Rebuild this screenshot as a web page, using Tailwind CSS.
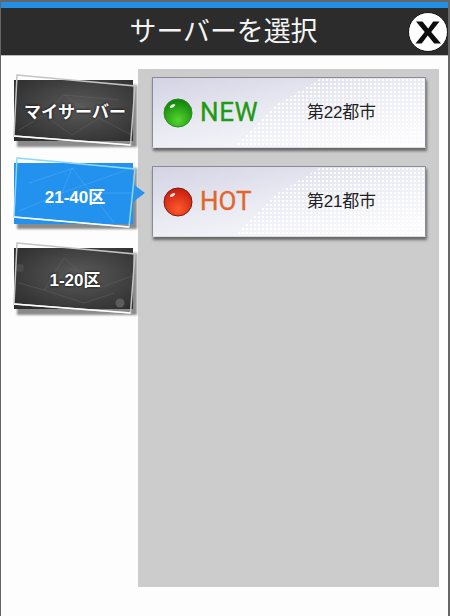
<!DOCTYPE html>
<html>
<head>
<meta charset="UTF-8">
<script src="https://cdn.jsdelivr.net/npm/@tailwindcss/browser@4"></script>
</head>
<body class="bg-white">
<div class="w-[450px] h-[616px] flex flex-col overflow-hidden bg-[#fdfdfd] border-x border-x-[#666] border-r-2 font-['Liberation_Sans','Noto_Sans_CJK_JP',sans-serif]">
  <!-- header -->
  <div class="h-[2px] bg-[#666] -mx-px"></div>
  <div class="h-[6px] bg-[#2390e6]"></div>
  <div class="relative h-[48px] bg-[#2c2c2c] border-b border-b-[#bbb] flex items-center justify-center pr-[2px]">
    <h1 class="text-[26.9px] leading-none text-[#f4f4f4] font-normal pt-[1px]">サーバーを選択</h1>
    <button class="absolute right-[0px] top-[4px] w-[40px] h-[40px]">
      <svg viewBox="0 0 40 40" class="w-full h-full">
        <circle cx="20" cy="20" r="19.500" fill="#fff" stroke="#111" stroke-width="1"/>
        <path d="M8 9.500h6.500l5.700 7 5-7h6.300l-8.300 10.500 9.800 11.500h-6.800l-6.400-8-6.100 8h-6.200l9.200-11.600z" fill="#0d0d0d"/>
      </svg>
    </button>
  </div>
  <!-- body -->
  <div class="flex pt-[13px]">
    <ul class="w-[137px] shrink-0 pl-[13px] pt-[11px] flex flex-col">
      <li class="relative w-[120px] h-[62px] flex items-center justify-center pt-[3px]">
        <svg viewBox="0 0 120 62" class="absolute inset-0 w-[120px] h-[62px] overflow-visible">
          <defs>
            <radialGradient id="dark" cx="0.55" cy="0.45" r="0.7"><stop offset="0" stop-color="#5a5a5a"/><stop offset="1" stop-color="#2e2e2e"/></radialGradient>
            <filter id="blur" x="-10%" y="-20%" width="120%" height="140%"><feGaussianBlur stdDeviation="1"/></filter>
          </defs>
          <rect x="3" y="5" width="120" height="62" fill="#8a8a8a" filter="url(#blur)"/>
          <rect width="119" height="61" fill="url(#dark)"/>
          <path d="M5 50 30 35 58 55 85 38 118 55M30 35 50 15 85 38M50 15 105 20" stroke="#6b6b6b" stroke-width=".4" fill="none"/>
          <polygon points="3,-5 121,6 116.500,65 0,56" fill="none" stroke="#c4c4c4" stroke-width="1.500"/>
          <path d="M0 56 116.500 65" stroke="#fff" stroke-width="1.500"/>
        </svg>
        <span class="relative left-[1px] text-[17px] font-bold text-white whitespace-nowrap [text-shadow:0_0_3px_#000]">マイサーバー</span>
      </li>
      <li class="relative w-[120px] h-[62px] mt-[21px] flex items-center justify-center pt-[7px]">
        <svg viewBox="0 0 120 62" class="absolute inset-0 w-[120px] h-[62px] overflow-visible">
          <rect x="3" y="5" width="120" height="61" fill="#8a8a8a" filter="url(#blur)"/>
          <polygon points="119,21 131,30 119,39" fill="#2b93ea"/>
          <rect width="119" height="61" fill="#2392ee"/>
          <path d="M5 48 48 30 118 5M48 30 58 5 100 60M72 30 118 30M60 5 15 20" stroke="#5fb0f2" stroke-width=".4" fill="none"/>
          <polygon points="3,-5 121,6 115,64 0,54" fill="none" stroke="#8ad8fb" stroke-width="1.500"/>
          <path d="M0 54 115 64" stroke="#fff" stroke-width="1.500"/>
        </svg>
        <span class="relative left-[1px] text-[17px] font-bold text-white whitespace-nowrap">21-40区</span>
      </li>
      <li class="relative w-[120px] h-[62px] mt-[23px] flex items-center justify-center pt-[4px]">
        <svg viewBox="0 0 120 62" class="absolute inset-0 w-[120px] h-[62px] overflow-visible">
          <rect x="3" y="5" width="120" height="62" fill="#8a8a8a" filter="url(#blur)"/>
          <rect width="119" height="61" fill="url(#dark)"/>
          <path d="M5 35 30 42 58 20 85 40 118 28M30 42 50 10 85 40M30 42 70 55 100 45" stroke="#6b6b6b" stroke-width=".4" fill="none"/>
          <circle cx="106" cy="55" r="4.500" fill="#5c5c5c"/>
          <circle cx="6" cy="20" r="4" fill="#4a4a4a"/>
          <polygon points="3,-5 121,6 116.500,65 0,56" fill="none" stroke="#c4c4c4" stroke-width="1.500"/>
          <path d="M0 56 116.500 65" stroke="#fff" stroke-width="1.500"/>
        </svg>
        <span class="relative left-[1px] text-[17px] font-bold text-white whitespace-nowrap [text-shadow:0_0_3px_#000]">1-20区</span>
      </li>
    </ul>
    <!-- server list -->
    <div class="w-[301px] h-[518px] bg-[#cccccc] px-[14px] pt-[8px] flex flex-col gap-[18px]">
      <div class="relative h-[71px] w-[274px] flex items-center border border-[#8a8a96] border-b-[#ddd] rounded-[1px] bg-[linear-gradient(168deg,#d3d3e4_0%,#ecedf4_50%,#fbfbfd_90%)] shadow-[1px_3px_3px_#666]">
        <div class="absolute inset-0 bg-[radial-gradient(#ffffff_1.2px,transparent_1.2px)] bg-[length:4px_4px] [clip-path:polygon(62%_0,100%_0,100%_100%,30%_100%,45%_40%)]"></div>
        <svg viewBox="0 0 30 30" class="relative ml-[10px] w-[30px] h-[30px]">
          <defs>
            <radialGradient id="g" cx=".5" cy=".75" r=".75"><stop offset="0" stop-color="#55d82e"/><stop offset="1" stop-color="#0c7d0c"/></radialGradient>
            <radialGradient id="r" cx=".5" cy=".75" r=".75"><stop offset="0" stop-color="#ff5a2a"/><stop offset="1" stop-color="#c41c10"/></radialGradient>
          </defs>
          <circle cx="15" cy="15" r="14" fill="url(#g)" stroke="#2d8a20"/>
          <ellipse cx="9.500" cy="8" rx="3" ry="1.500" transform="rotate(-30 9.500 8)" fill="#fff" opacity=".85"/>
        </svg>
        <span class="relative ml-[7px] w-[107px] font-['Roboto',sans-serif] tracking-[0.6px] text-[26px] leading-none text-[#1f9a12] [-webkit-text-stroke:0.3px_#1f9a12] pb-[1px]">NEW</span>
        <span class="relative text-[17px] tracking-[-0.2px] text-[#222] whitespace-nowrap">第22都市</span>
      </div>
      <div class="relative h-[71px] w-[274px] flex items-center border border-[#8a8a96] border-b-[#ddd] rounded-[1px] bg-[linear-gradient(168deg,#d3d3e4_0%,#ecedf4_50%,#fbfbfd_90%)] shadow-[1px_3px_3px_#666]">
        <div class="absolute inset-0 bg-[radial-gradient(#ffffff_1.2px,transparent_1.2px)] bg-[length:4px_4px] [clip-path:polygon(62%_0,100%_0,100%_100%,30%_100%,45%_40%)]"></div>
        <svg viewBox="0 0 30 30" class="relative ml-[10px] w-[30px] h-[30px]">
          <circle cx="15" cy="15" r="14" fill="url(#r)" stroke="#7d1a10"/>
          <ellipse cx="9.500" cy="8" rx="3" ry="1.500" transform="rotate(-30 9.500 8)" fill="#fff" opacity=".85"/>
        </svg>
        <span class="relative ml-[7px] w-[107px] font-['Roboto',sans-serif] text-[26px] leading-none text-[#e0662a] [-webkit-text-stroke:0.3px_#e0662a] pb-[1px]">HOT</span>
        <span class="relative text-[17px] tracking-[-0.2px] text-[#222] whitespace-nowrap">第21都市</span>
      </div>
    </div>
  </div>
</div>
</body>
</html>
